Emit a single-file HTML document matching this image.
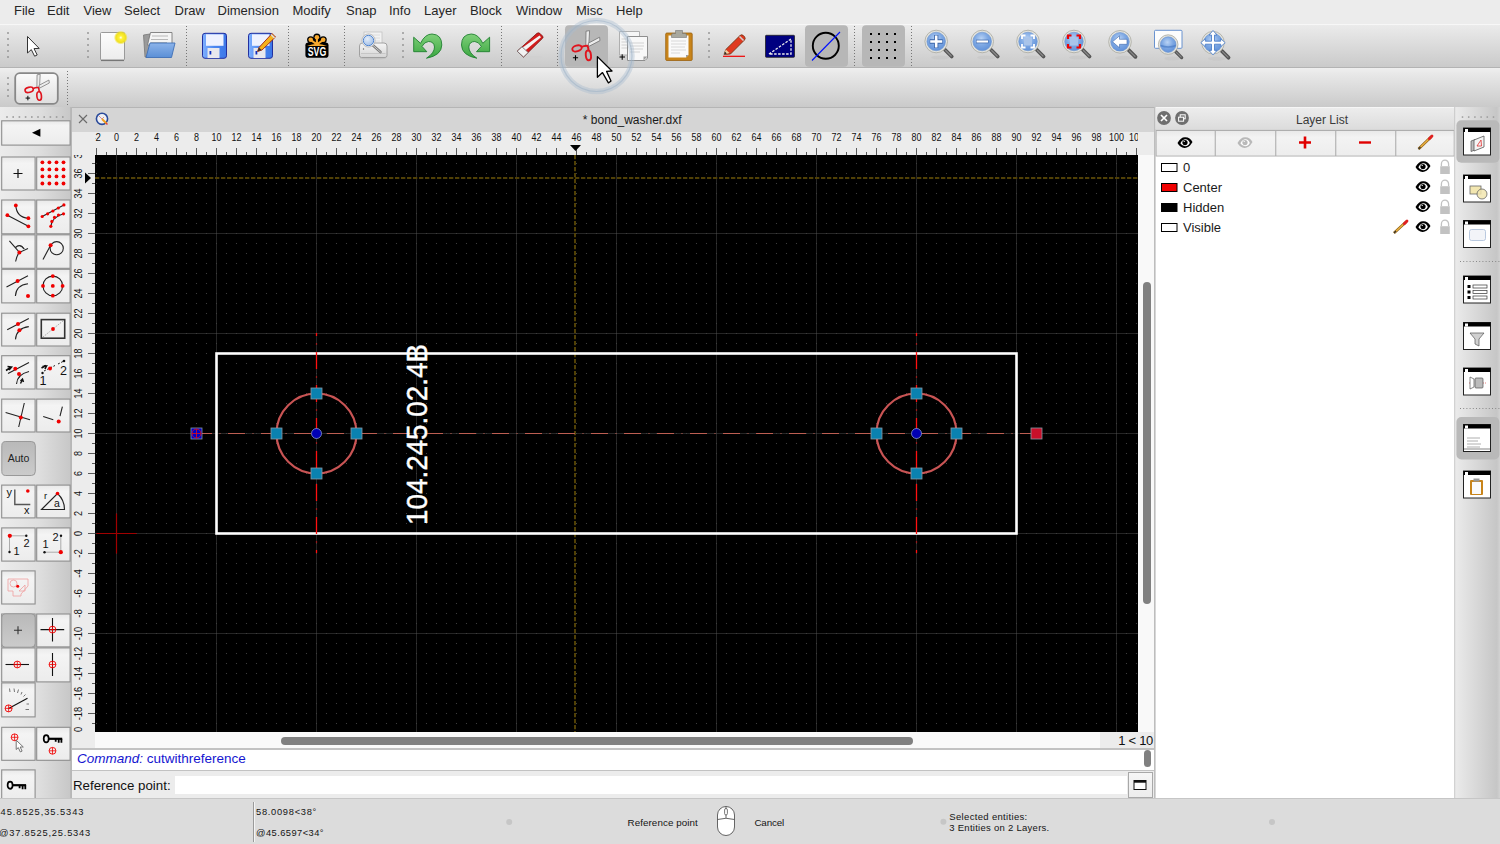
<!DOCTYPE html><html><head><meta charset="utf-8"><style>
*{margin:0;padding:0;box-sizing:border-box}
html,body{width:1500px;height:844px;overflow:hidden;background:#ececec;font-family:"Liberation Sans",sans-serif;color:#222}
.a{position:absolute}
.menu span{position:absolute;top:3px;font-size:13px;color:#262626;white-space:nowrap}
.grip{position:absolute;width:3px;background:radial-gradient(circle,#8a8a8a 45%,transparent 55%) 0 0/3px 4.2px repeat-y}
.sep{position:absolute;width:1px;background:linear-gradient(#7a7a7a 50%,transparent 50%) 0 0/1px 3px repeat-y}
.btn{position:absolute;border:1px solid #8e8e8e;background:linear-gradient(#f3f3f3,#e6e6e6)}
.rl{position:absolute;font-size:10px;color:#111;text-align:center;width:30px;line-height:10px}
</style></head><body>
<div class="a" style="left:0;top:0;width:1500px;height:24px;background:#ececec"></div>
<div class="menu">
<span style="left:14px">File</span>
<span style="left:47px">Edit</span>
<span style="left:83.5px">View</span>
<span style="left:124px">Select</span>
<span style="left:174.5px">Draw</span>
<span style="left:217.5px">Dimension</span>
<span style="left:292.5px">Modify</span>
<span style="left:346px">Snap</span>
<span style="left:389px">Info</span>
<span style="left:424px">Layer</span>
<span style="left:470px">Block</span>
<span style="left:516px">Window</span>
<span style="left:576px">Misc</span>
<span style="left:616px">Help</span>
</div>
<div class="a" style="left:0;top:24px;width:1500px;height:44px;background:linear-gradient(#ebebeb,#e6e6e6 15%,#cacaca);border-top:1px solid #f7f7f7;border-bottom:1.5px solid #b3b3b3"></div>
<div class="a" style="left:0;top:68px;width:1500px;height:40px;background:linear-gradient(#efefef,#e8e8e8 15%,#cacaca);border-bottom:1.5px solid #b5b5b5"></div>
<svg class="a" style="left:0;top:107px" width="72" height="691" viewBox="0 107 72 691"><defs><linearGradient id="gbt" x1="0" y1="0" x2="0" y2="1"><stop offset="0" stop-color="#e9e9e9"/><stop offset="0.2" stop-color="#f4f4f4"/><stop offset="1" stop-color="#ececec"/></linearGradient>
<linearGradient id="gstrip" x1="0" y1="0" x2="1" y2="0"><stop offset="0" stop-color="#ececec"/><stop offset="0.55" stop-color="#dedede"/><stop offset="1" stop-color="#c6c6c6"/></linearGradient>
<linearGradient id="gpress" x1="0" y1="0" x2="0" y2="1"><stop offset="0" stop-color="#b9b9b9"/><stop offset="1" stop-color="#cbcbcb"/></linearGradient></defs><rect x="0" y="107" width="72" height="691" fill="url(#gstrip)"/><rect x="70.3" y="107" width="1.5" height="691" fill="#b4b4b4"/><rect x="6.2" y="116.2" width="1.6" height="1.6" fill="#9a9a9a"/><rect x="12.399999999999999" y="116.2" width="1.6" height="1.6" fill="#9a9a9a"/><rect x="18.599999999999998" y="116.2" width="1.6" height="1.6" fill="#9a9a9a"/><rect x="24.8" y="116.2" width="1.6" height="1.6" fill="#9a9a9a"/><rect x="31.0" y="116.2" width="1.6" height="1.6" fill="#9a9a9a"/><rect x="37.2" y="116.2" width="1.6" height="1.6" fill="#9a9a9a"/><rect x="43.400000000000006" y="116.2" width="1.6" height="1.6" fill="#9a9a9a"/><rect x="49.6" y="116.2" width="1.6" height="1.6" fill="#9a9a9a"/><rect x="55.800000000000004" y="116.2" width="1.6" height="1.6" fill="#9a9a9a"/><rect x="62.00000000000001" y="116.2" width="1.6" height="1.6" fill="#9a9a9a"/><rect x="1.7" y="120.8" width="68.39999999999999" height="24.299999999999997" rx="0" fill="url(#gbt)" stroke="#8e8e8e" stroke-width="1.1"/><path d="M32 132.8L40.4 128.8V136.8Z" fill="#000"/><rect x="1.7" y="157.0" width="33.4" height="33.0" rx="0" fill="url(#gbt)" stroke="#8e8e8e" stroke-width="1.1"/><rect x="36.7" y="157.0" width="33.39999999999999" height="33.0" rx="0" fill="url(#gbt)" stroke="#8e8e8e" stroke-width="1.1"/><rect x="1.7" y="200.0" width="33.4" height="33.80000000000001" rx="0" fill="url(#gbt)" stroke="#8e8e8e" stroke-width="1.1"/><rect x="36.7" y="200.0" width="33.39999999999999" height="33.80000000000001" rx="0" fill="url(#gbt)" stroke="#8e8e8e" stroke-width="1.1"/><rect x="1.7" y="234.8" width="33.4" height="33.5" rx="0" fill="url(#gbt)" stroke="#8e8e8e" stroke-width="1.1"/><rect x="36.7" y="234.8" width="33.39999999999999" height="33.5" rx="0" fill="url(#gbt)" stroke="#8e8e8e" stroke-width="1.1"/><rect x="1.7" y="269.3" width="33.4" height="33.599999999999966" rx="0" fill="url(#gbt)" stroke="#8e8e8e" stroke-width="1.1"/><rect x="36.7" y="269.3" width="33.39999999999999" height="33.599999999999966" rx="0" fill="url(#gbt)" stroke="#8e8e8e" stroke-width="1.1"/><rect x="1.7" y="313.2" width="33.4" height="32.80000000000001" rx="0" fill="url(#gbt)" stroke="#8e8e8e" stroke-width="1.1"/><rect x="36.7" y="313.2" width="33.39999999999999" height="32.80000000000001" rx="0" fill="url(#gbt)" stroke="#8e8e8e" stroke-width="1.1"/><rect x="1.7" y="355.7" width="33.4" height="33.30000000000001" rx="0" fill="url(#gbt)" stroke="#8e8e8e" stroke-width="1.1"/><rect x="36.7" y="355.7" width="33.39999999999999" height="33.30000000000001" rx="0" fill="url(#gbt)" stroke="#8e8e8e" stroke-width="1.1"/><rect x="1.7" y="399.1" width="33.4" height="32.89999999999998" rx="0" fill="url(#gbt)" stroke="#8e8e8e" stroke-width="1.1"/><rect x="36.7" y="399.1" width="33.39999999999999" height="32.89999999999998" rx="0" fill="url(#gbt)" stroke="#8e8e8e" stroke-width="1.1"/><rect x="1.7" y="485.1" width="33.4" height="32.799999999999955" rx="0" fill="url(#gbt)" stroke="#8e8e8e" stroke-width="1.1"/><rect x="36.7" y="485.1" width="33.39999999999999" height="32.799999999999955" rx="0" fill="url(#gbt)" stroke="#8e8e8e" stroke-width="1.1"/><rect x="1.7" y="527.9" width="33.4" height="33.200000000000045" rx="0" fill="url(#gbt)" stroke="#8e8e8e" stroke-width="1.1"/><rect x="36.7" y="527.9" width="33.39999999999999" height="33.200000000000045" rx="0" fill="url(#gbt)" stroke="#8e8e8e" stroke-width="1.1"/><rect x="1.7" y="614.0" width="33.4" height="32.89999999999998" rx="0" fill="url(#gbt)" stroke="#8e8e8e" stroke-width="1.1"/><rect x="36.7" y="614.0" width="33.39999999999999" height="32.89999999999998" rx="0" fill="url(#gbt)" stroke="#8e8e8e" stroke-width="1.1"/><rect x="1.7" y="647.9" width="33.4" height="34.0" rx="0" fill="url(#gbt)" stroke="#8e8e8e" stroke-width="1.1"/><rect x="36.7" y="647.9" width="33.39999999999999" height="34.0" rx="0" fill="url(#gbt)" stroke="#8e8e8e" stroke-width="1.1"/><rect x="1.7" y="727.3" width="33.4" height="33.0" rx="0" fill="url(#gbt)" stroke="#8e8e8e" stroke-width="1.1"/><rect x="36.7" y="727.3" width="33.39999999999999" height="33.0" rx="0" fill="url(#gbt)" stroke="#8e8e8e" stroke-width="1.1"/><rect x="1.7" y="570.9" width="33.4" height="33.10000000000002" rx="0" fill="url(#gbt)" stroke="#8e8e8e" stroke-width="1.1"/><rect x="1.7" y="682.9" width="33.4" height="34.0" rx="0" fill="url(#gbt)" stroke="#8e8e8e" stroke-width="1.1"/><rect x="1.7" y="769.9" width="33.4" height="29.600000000000023" rx="0" fill="url(#gbt)" stroke="#8e8e8e" stroke-width="1.1"/><rect x="1.8" y="441.5" width="33.5" height="34" rx="4" fill="url(#gpress)" stroke="#999" stroke-width="1"/><text x="18.5" y="462" text-anchor="middle" font-family="Liberation Sans" font-size="10.5" fill="#222">Auto</text><rect x="1.8" y="613.8" width="33.4" height="33.4" rx="4" fill="url(#gpress)" stroke="#999" stroke-width="1"/><path d="M13.5 173.5H22.5M18 169V178" stroke="#111" stroke-width="1.2"/><circle cx="42.4" cy="162.3" r="1.9" fill="#f00000"/><circle cx="42.4" cy="169.4" r="1.9" fill="#f00000"/><circle cx="42.4" cy="176.4" r="1.9" fill="#f00000"/><circle cx="42.4" cy="183.5" r="1.9" fill="#f00000"/><circle cx="49.4" cy="162.3" r="1.9" fill="#f00000"/><circle cx="49.4" cy="169.4" r="1.9" fill="#f00000"/><circle cx="49.4" cy="176.4" r="1.9" fill="#f00000"/><circle cx="49.4" cy="183.5" r="1.9" fill="#f00000"/><circle cx="56.5" cy="162.3" r="1.9" fill="#f00000"/><circle cx="56.5" cy="169.4" r="1.9" fill="#f00000"/><circle cx="56.5" cy="176.4" r="1.9" fill="#f00000"/><circle cx="56.5" cy="183.5" r="1.9" fill="#f00000"/><circle cx="63.5" cy="162.3" r="1.9" fill="#f00000"/><circle cx="63.5" cy="169.4" r="1.9" fill="#f00000"/><circle cx="63.5" cy="176.4" r="1.9" fill="#f00000"/><circle cx="63.5" cy="183.5" r="1.9" fill="#f00000"/><path d="M7.4 215.2L28.4 226.3M15.8 205.4Q16.5 217.5 28.4 218.2" stroke="#222" stroke-width="1.1" fill="none"/><circle cx="7.4" cy="215.2" r="1.9" fill="#f00000"/><circle cx="28.4" cy="226.3" r="1.9" fill="#f00000"/><circle cx="15.8" cy="205.4" r="1.9" fill="#f00000"/><circle cx="28.4" cy="218.2" r="1.9" fill="#f00000"/><path d="M42.2 216.5L63.9 204.9M50.8 226.3Q52 217 63.5 213.8" stroke="#222" stroke-width="1.1" fill="none"/><circle cx="42.2" cy="216.5" r="1.6" fill="#f00000"/><circle cx="47.6" cy="213.8" r="1.6" fill="#f00000"/><circle cx="52.9" cy="211" r="1.6" fill="#f00000"/><circle cx="58.3" cy="208" r="1.6" fill="#f00000"/><circle cx="63.9" cy="204.9" r="1.6" fill="#f00000"/><circle cx="50.8" cy="226.3" r="1.6" fill="#f00000"/><circle cx="51.9" cy="221.4" r="1.6" fill="#f00000"/><circle cx="54.5" cy="217.4" r="1.6" fill="#f00000"/><circle cx="58.5" cy="215" r="1.6" fill="#f00000"/><circle cx="63.5" cy="213.8" r="1.6" fill="#f00000"/><path d="M9.4 240.9L19.4 252.4L28 248.5M19.4 252.4Q16.5 256 15.6 261.5M15.5 247.5Q20 243 24 249" stroke="#222" stroke-width="1.1" fill="none"/><path d="M15.5 247.5Q20 243.5 24.5 248.5" stroke="#333" stroke-width="0.7" fill="none"/><circle cx="19.4" cy="252.4" r="2" fill="#f00000"/><circle cx="56.7" cy="248.2" r="6.6" stroke="#222" stroke-width="1.1" fill="none"/><path d="M43 259.5L50.6 245.2" stroke="#222" stroke-width="1.1" fill="none"/><circle cx="50.6" cy="245.2" r="2" fill="#f00000"/><path d="M6.5 286.9L28 275.8M15.4 296Q16 285 28 283.7" stroke="#222" stroke-width="1.1" fill="none"/><circle cx="17.6" cy="281" r="2" fill="#f00000"/><circle cx="28" cy="296" r="2" fill="#f00000"/><circle cx="52.8" cy="285.9" r="9.8" stroke="#222" stroke-width="1.1" fill="none"/><circle cx="52.8" cy="285.9" r="1.9" fill="#f00000"/><circle cx="52.8" cy="276.1" r="1.9" fill="#f00000"/><circle cx="52.8" cy="295.7" r="1.9" fill="#f00000"/><circle cx="43" cy="285.9" r="1.9" fill="#f00000"/><circle cx="62.6" cy="285.9" r="1.9" fill="#f00000"/><path d="M7.2 329.8L28.8 318.6M15.5 339.4Q16.5 328 28.8 326.6" stroke="#222" stroke-width="1.1" fill="none"/><circle cx="18" cy="323.9" r="2" fill="#f00000"/><circle cx="19.4" cy="330.3" r="2" fill="#f00000"/><rect x="41.3" y="319.6" width="23.4" height="18.6" fill="none" stroke="#333" stroke-width="1.6"/><path d="M43 337L63.5 320.5" stroke="#888" stroke-width="0.7" stroke-dasharray="1.5 1.2"/><circle cx="53" cy="329" r="1.9" fill="#f00000"/><path d="M8 373.5L29 362.5M16.5 384Q17 374.5 29 371.5" stroke="#222" stroke-width="1.1" fill="none"/><path d="M6 370.5L10.5 367.5M7.5 366.5L11.5 367L9 370" stroke="#111" stroke-width="1.6" fill="none"/><path d="M20.5 383.5L22.5 379.5M20.5 381L22.5 379L23.5 382" stroke="#111" stroke-width="1.4" fill="none"/><circle cx="15.3" cy="368.8" r="2" fill="#f00000"/><circle cx="19" cy="374" r="2" fill="#f00000"/><path d="M44 371L55 365.5M58 364L63 361.5" stroke="#222" stroke-width="1" stroke-dasharray="2 1.5"/><path d="M41.5 368L46 365.5M42.5 366.5L46.5 366L45 369" stroke="#111" stroke-width="1.6" fill="none"/><circle cx="42.5" cy="373" r="1.2" fill="#111"/><circle cx="64" cy="361" r="1.3" fill="#111"/><circle cx="50" cy="368.5" r="2" fill="#f00000"/><text x="39.5" y="385.2" font-family="Liberation Sans" font-size="12.5" fill="#111">1</text><text x="60" y="375.2" font-family="Liberation Sans" font-size="12.5" fill="#111">2</text><path d="M5.6 412.5L30 419.7M24.3 403L18.7 427" stroke="#222" stroke-width="1.1" fill="none"/><circle cx="20.8" cy="417.5" r="2" fill="#f00000"/><path d="M43.2 416.5L53.3 419.7M62.4 406.6L60 416.2" stroke="#222" stroke-width="1.1" fill="none"/><circle cx="58.7" cy="421.5" r="2" fill="#f00000"/><path d="M14.8 489.5V504.5H30.3" stroke="#555" stroke-width="1.4" fill="none"/><text x="6.5" y="496" font-family="Liberation Sans" font-size="11" fill="#111">y</text><text x="24" y="513.5" font-family="Liberation Sans" font-size="11" fill="#111">x</text><circle cx="27.8" cy="491" r="1.8" fill="#f00000"/><path d="M41.5 509.5L57.5 493.5Q64.5 500 64.5 509.5Z" stroke="#222" stroke-width="1.1" fill="none"/><text x="44" y="498.5" font-family="Liberation Sans" font-size="9.5" fill="#111">r</text><text x="54" y="507" font-family="Liberation Sans" font-size="10.5" fill="#111">a</text><circle cx="57.5" cy="493.5" r="1.8" fill="#f00000"/><path d="M9.5 535.8V552.2M9.5 535.8H26" stroke="#999" stroke-width="0.8"/><circle cx="9.8" cy="535.8" r="2.1" fill="#f00000"/><circle cx="9.5" cy="552" r="1.2" fill="#111"/><circle cx="26.3" cy="535.8" r="1.2" fill="#111"/><text x="13.5" y="554.5" font-family="Liberation Sans" font-size="11" fill="#111">1</text><text x="23.5" y="546.5" font-family="Liberation Sans" font-size="11" fill="#111">2</text><path d="M60.8 535.8V552.2M44.5 552.2H60.8" stroke="#999" stroke-width="0.8"/><circle cx="60.8" cy="552.2" r="2.1" fill="#f00000"/><circle cx="44.5" cy="552.2" r="1.2" fill="#111"/><circle cx="61" cy="535.8" r="1.2" fill="#111"/><text x="42.5" y="548" font-family="Liberation Sans" font-size="11" fill="#111">1</text><text x="52.5" y="540.5" font-family="Liberation Sans" font-size="11" fill="#111">2</text><path d="M8 579H28V586L21 594V596H13V591H8Z" fill="none" stroke="#f0a0a0" stroke-width="0.8"/><circle cx="13.5" cy="583.5" r="3.5" fill="none" stroke="#f0a0a0" stroke-width="0.8"/><path d="M19 591L25 585V591Z" fill="none" stroke="#f0a0a0" stroke-width="0.8"/><circle cx="17.7" cy="586.3" r="1.5" fill="#f00000"/><path d="M14 630.3H22M18 626.3V634.3" stroke="#333" stroke-width="1.1"/><path d="M40.5 629.6H64.2M52.5 617.9V641.5" stroke="#111" stroke-width="1.1"/><circle cx="52.5" cy="629.6" r="3.4" fill="none" stroke="#f00000" stroke-width="0.9"/><path d="M49.1 629.6H55.9M52.5 626.2V633.0" stroke="#f00000" stroke-width="0.8"/><path d="M5.5 664.5H29" stroke="#111" stroke-width="1.1"/><circle cx="17.3" cy="664.5" r="3.4" fill="none" stroke="#f00000" stroke-width="0.9"/><path d="M13.9 664.5H20.7M17.3 661.1V667.9" stroke="#f00000" stroke-width="0.8"/><path d="M52.5 653V676" stroke="#111" stroke-width="1.1"/><circle cx="52.5" cy="664.5" r="3.4" fill="none" stroke="#f00000" stroke-width="0.9"/><path d="M49.1 664.5H55.9M52.5 661.1V667.9" stroke="#f00000" stroke-width="0.8"/><path d="M8.6 708.4L27.5 698.3" stroke="#111" stroke-width="1.1"/><path d="M9.5 688.5L10 692M14 688.5L14.5 692M18.5 689.5L17.5 693M22 692L21 694.5M25.5 694.5L23.5 696.5M26.5 704H29M25.5 709.5H29" stroke="#555" stroke-width="0.8"/><circle cx="8.6" cy="708.4" r="3.5" fill="none" stroke="#f00000" stroke-width="0.9"/><path d="M5.1 708.4H12.1M8.6 704.9V711.9" stroke="#f00000" stroke-width="0.8"/><circle cx="14.6" cy="737.3" r="3.4" fill="none" stroke="#f00000" stroke-width="0.9"/><path d="M11.2 737.3H18.0M14.6 733.9V740.6999999999999" stroke="#f00000" stroke-width="0.8"/><path d="M16.2 740.2V749.5L18.3 747.6L20.3 751.9L22.1 751.1L20.2 747H23.3Z" fill="#fff" stroke="#666" stroke-width="0.9"/><ellipse cx="46.2" cy="738.8" rx="2.5" ry="3.6" fill="none" stroke="#000" stroke-width="1.7"/><path d="M49.0 738.8H62.2" stroke="#000" stroke-width="2.2"/><path d="M58.7 738.8V742.8M61.400000000000006 738.8V742.8M55.7 738.8V741.8" stroke="#000" stroke-width="1.8"/><circle cx="52.5" cy="750.8" r="3.4" fill="none" stroke="#f00000" stroke-width="0.9"/><path d="M49.1 750.8H55.9M52.5 747.4V754.1999999999999" stroke="#f00000" stroke-width="0.8"/><ellipse cx="10.1" cy="785.2" rx="2.5" ry="3.6" fill="none" stroke="#000" stroke-width="1.7"/><path d="M12.899999999999999 785.2H26.1" stroke="#000" stroke-width="2.2"/><path d="M22.6 785.2V789.2M25.299999999999997 785.2V789.2M19.6 785.2V788.2" stroke="#000" stroke-width="1.8"/></svg>
<div class="a" style="left:72px;top:108px;width:1083px;height:24px;background:#d5d5d5"></div>
<div class="a" style="left:72px;top:132px;width:1083px;height:616px;background:#ececec"></div>
<svg class="a" style="left:95px;top:155px" width="1043" height="577" viewBox="95 155 1043 577"><defs><pattern id="dots" x="116" y="163" width="10" height="10" patternUnits="userSpaceOnUse"><rect width="1" height="1" fill="#3e3e3e"/></pattern></defs><rect x="95" y="155" width="1043" height="577" fill="#000"/><path d="M116.5 155V732 M216.5 155V732 M316.5 155V732 M416.5 155V732 M516.5 155V732 M616.5 155V732 M716.5 155V732 M816.5 155V732 M916.5 155V732 M1016.5 155V732 M1116.5 155V732 M95 233.5H1138 M95 333.5H1138 M95 433.5H1138 M95 533.5H1138 M95 633.5H1138" stroke="#262626" stroke-width="1" fill="none"/><rect x="95" y="155" width="1043" height="577" fill="url(#dots)"/><path d="M575 155V732" stroke="#504006" stroke-width="2" stroke-dasharray="4.3 1.7" fill="none"/><path d="M95 178H1138" stroke="#504006" stroke-width="2" stroke-dasharray="4.3 1.7" fill="none"/><path d="M96.5 533.5H136.5M116.5 513.5V553.5" stroke="#a00000" stroke-width="1.2" fill="none"/><rect x="216.5" y="353.5" width="800" height="180" stroke="#fff" stroke-width="2.6" fill="none"/><path d="M316.5 333V553" stroke="#ff1010" stroke-width="1.3" stroke-dasharray="17 7.5 1 7.5" stroke-dashoffset="14" fill="none"/><path d="M916.5 333V553" stroke="#ff1010" stroke-width="1.3" stroke-dasharray="17 7.5 1 7.5" stroke-dashoffset="14" fill="none"/><path d="M196.5 433.5H1036.5" stroke="#bd5e52" stroke-width="1.15" stroke-dasharray="17 7.5 1 7.5" stroke-dashoffset="1.5" fill="none"/><circle cx="316.5" cy="433.5" r="40" stroke="#c85454" stroke-width="2.2" fill="none"/><circle cx="916.5" cy="433.5" r="40" stroke="#c85454" stroke-width="2.2" fill="none"/><text x="0" y="0" transform="translate(426.5 525) rotate(-90)" font-family="Liberation Sans" font-size="29.5" textLength="181" lengthAdjust="spacingAndGlyphs" fill="#fff" stroke="#fff" stroke-width="0.45">104.245.02.4B</text><rect x="311.0" y="388.0" width="11" height="11" fill="#0a82b0" stroke="#8a9aa6" stroke-width="0.8"/><rect x="311.0" y="468.0" width="11" height="11" fill="#0a82b0" stroke="#8a9aa6" stroke-width="0.8"/><rect x="271.0" y="428.0" width="11" height="11" fill="#0a82b0" stroke="#8a9aa6" stroke-width="0.8"/><rect x="351.0" y="428.0" width="11" height="11" fill="#0a82b0" stroke="#8a9aa6" stroke-width="0.8"/><circle cx="316.5" cy="433.5" r="5" fill="#0000b4" stroke="#8a9ad0" stroke-width="0.8"/><rect x="911.0" y="388.0" width="11" height="11" fill="#0a82b0" stroke="#8a9aa6" stroke-width="0.8"/><rect x="911.0" y="468.0" width="11" height="11" fill="#0a82b0" stroke="#8a9aa6" stroke-width="0.8"/><rect x="871.0" y="428.0" width="11" height="11" fill="#0a82b0" stroke="#8a9aa6" stroke-width="0.8"/><rect x="951.0" y="428.0" width="11" height="11" fill="#0a82b0" stroke="#8a9aa6" stroke-width="0.8"/><circle cx="916.5" cy="433.5" r="5" fill="#0000b4" stroke="#8a9ad0" stroke-width="0.8"/><rect x="191.0" y="428.0" width="11" height="11" fill="#0000c8" stroke="#8a9aa6" stroke-width="0.8"/><path d="M196.5 428.8V438.2M191.8 433.5H201.2" stroke="#e01010" stroke-width="0.8"/><circle cx="196.5" cy="433.5" r="4.5" stroke="#e01010" stroke-width="0.8" fill="none"/><rect x="1031.0" y="428.0" width="11" height="11" fill="#c8102a" stroke="#8a9aa6" stroke-width="0.8"/></svg>
<svg class="a" style="left:95px;top:132px" width="1043" height="23" viewBox="95 132 1043 23"><path d="M96.5 148V155 M106.5 152V155 M116.5 148V155 M126.5 152V155 M136.5 148V155 M146.5 152V155 M156.5 148V155 M166.5 152V155 M176.5 148V155 M186.5 152V155 M196.5 148V155 M206.5 152V155 M216.5 148V155 M226.5 152V155 M236.5 148V155 M246.5 152V155 M256.5 148V155 M266.5 152V155 M276.5 148V155 M286.5 152V155 M296.5 148V155 M306.5 152V155 M316.5 148V155 M326.5 152V155 M336.5 148V155 M346.5 152V155 M356.5 148V155 M366.5 152V155 M376.5 148V155 M386.5 152V155 M396.5 148V155 M406.5 152V155 M416.5 148V155 M426.5 152V155 M436.5 148V155 M446.5 152V155 M456.5 148V155 M466.5 152V155 M476.5 148V155 M486.5 152V155 M496.5 148V155 M506.5 152V155 M516.5 148V155 M526.5 152V155 M536.5 148V155 M546.5 152V155 M556.5 148V155 M566.5 152V155 M576.5 148V155 M586.5 152V155 M596.5 148V155 M606.5 152V155 M616.5 148V155 M626.5 152V155 M636.5 148V155 M646.5 152V155 M656.5 148V155 M666.5 152V155 M676.5 148V155 M686.5 152V155 M696.5 148V155 M706.5 152V155 M716.5 148V155 M726.5 152V155 M736.5 148V155 M746.5 152V155 M756.5 148V155 M766.5 152V155 M776.5 148V155 M786.5 152V155 M796.5 148V155 M806.5 152V155 M816.5 148V155 M826.5 152V155 M836.5 148V155 M846.5 152V155 M856.5 148V155 M866.5 152V155 M876.5 148V155 M886.5 152V155 M896.5 148V155 M906.5 152V155 M916.5 148V155 M926.5 152V155 M936.5 148V155 M946.5 152V155 M956.5 148V155 M966.5 152V155 M976.5 148V155 M986.5 152V155 M996.5 148V155 M1006.5 152V155 M1016.5 148V155 M1026.5 152V155 M1036.5 148V155 M1046.5 152V155 M1056.5 148V155 M1066.5 152V155 M1076.5 148V155 M1086.5 152V155 M1096.5 148V155 M1106.5 152V155 M1116.5 148V155 M1126.5 152V155 M1136.5 148V155" stroke="#5a5a5a" stroke-width="1"/><text x="96.5" y="141.2" text-anchor="middle" font-family="Liberation Sans" font-size="10" fill="#111" textLength="8.6" lengthAdjust="spacingAndGlyphs">-2</text><text x="116.5" y="141.2" text-anchor="middle" font-family="Liberation Sans" font-size="10" fill="#111" textLength="5.0" lengthAdjust="spacingAndGlyphs">0</text><text x="136.5" y="141.2" text-anchor="middle" font-family="Liberation Sans" font-size="10" fill="#111" textLength="5.0" lengthAdjust="spacingAndGlyphs">2</text><text x="156.5" y="141.2" text-anchor="middle" font-family="Liberation Sans" font-size="10" fill="#111" textLength="5.0" lengthAdjust="spacingAndGlyphs">4</text><text x="176.5" y="141.2" text-anchor="middle" font-family="Liberation Sans" font-size="10" fill="#111" textLength="5.0" lengthAdjust="spacingAndGlyphs">6</text><text x="196.5" y="141.2" text-anchor="middle" font-family="Liberation Sans" font-size="10" fill="#111" textLength="5.0" lengthAdjust="spacingAndGlyphs">8</text><text x="216.5" y="141.2" text-anchor="middle" font-family="Liberation Sans" font-size="10" fill="#111" textLength="9.9" lengthAdjust="spacingAndGlyphs">10</text><text x="236.5" y="141.2" text-anchor="middle" font-family="Liberation Sans" font-size="10" fill="#111" textLength="9.9" lengthAdjust="spacingAndGlyphs">12</text><text x="256.5" y="141.2" text-anchor="middle" font-family="Liberation Sans" font-size="10" fill="#111" textLength="9.9" lengthAdjust="spacingAndGlyphs">14</text><text x="276.5" y="141.2" text-anchor="middle" font-family="Liberation Sans" font-size="10" fill="#111" textLength="9.9" lengthAdjust="spacingAndGlyphs">16</text><text x="296.5" y="141.2" text-anchor="middle" font-family="Liberation Sans" font-size="10" fill="#111" textLength="9.9" lengthAdjust="spacingAndGlyphs">18</text><text x="316.5" y="141.2" text-anchor="middle" font-family="Liberation Sans" font-size="10" fill="#111" textLength="9.9" lengthAdjust="spacingAndGlyphs">20</text><text x="336.5" y="141.2" text-anchor="middle" font-family="Liberation Sans" font-size="10" fill="#111" textLength="9.9" lengthAdjust="spacingAndGlyphs">22</text><text x="356.5" y="141.2" text-anchor="middle" font-family="Liberation Sans" font-size="10" fill="#111" textLength="9.9" lengthAdjust="spacingAndGlyphs">24</text><text x="376.5" y="141.2" text-anchor="middle" font-family="Liberation Sans" font-size="10" fill="#111" textLength="9.9" lengthAdjust="spacingAndGlyphs">26</text><text x="396.5" y="141.2" text-anchor="middle" font-family="Liberation Sans" font-size="10" fill="#111" textLength="9.9" lengthAdjust="spacingAndGlyphs">28</text><text x="416.5" y="141.2" text-anchor="middle" font-family="Liberation Sans" font-size="10" fill="#111" textLength="9.9" lengthAdjust="spacingAndGlyphs">30</text><text x="436.5" y="141.2" text-anchor="middle" font-family="Liberation Sans" font-size="10" fill="#111" textLength="9.9" lengthAdjust="spacingAndGlyphs">32</text><text x="456.5" y="141.2" text-anchor="middle" font-family="Liberation Sans" font-size="10" fill="#111" textLength="9.9" lengthAdjust="spacingAndGlyphs">34</text><text x="476.5" y="141.2" text-anchor="middle" font-family="Liberation Sans" font-size="10" fill="#111" textLength="9.9" lengthAdjust="spacingAndGlyphs">36</text><text x="496.5" y="141.2" text-anchor="middle" font-family="Liberation Sans" font-size="10" fill="#111" textLength="9.9" lengthAdjust="spacingAndGlyphs">38</text><text x="516.5" y="141.2" text-anchor="middle" font-family="Liberation Sans" font-size="10" fill="#111" textLength="9.9" lengthAdjust="spacingAndGlyphs">40</text><text x="536.5" y="141.2" text-anchor="middle" font-family="Liberation Sans" font-size="10" fill="#111" textLength="9.9" lengthAdjust="spacingAndGlyphs">42</text><text x="556.5" y="141.2" text-anchor="middle" font-family="Liberation Sans" font-size="10" fill="#111" textLength="9.9" lengthAdjust="spacingAndGlyphs">44</text><text x="576.5" y="141.2" text-anchor="middle" font-family="Liberation Sans" font-size="10" fill="#111" textLength="9.9" lengthAdjust="spacingAndGlyphs">46</text><text x="596.5" y="141.2" text-anchor="middle" font-family="Liberation Sans" font-size="10" fill="#111" textLength="9.9" lengthAdjust="spacingAndGlyphs">48</text><text x="616.5" y="141.2" text-anchor="middle" font-family="Liberation Sans" font-size="10" fill="#111" textLength="9.9" lengthAdjust="spacingAndGlyphs">50</text><text x="636.5" y="141.2" text-anchor="middle" font-family="Liberation Sans" font-size="10" fill="#111" textLength="9.9" lengthAdjust="spacingAndGlyphs">52</text><text x="656.5" y="141.2" text-anchor="middle" font-family="Liberation Sans" font-size="10" fill="#111" textLength="9.9" lengthAdjust="spacingAndGlyphs">54</text><text x="676.5" y="141.2" text-anchor="middle" font-family="Liberation Sans" font-size="10" fill="#111" textLength="9.9" lengthAdjust="spacingAndGlyphs">56</text><text x="696.5" y="141.2" text-anchor="middle" font-family="Liberation Sans" font-size="10" fill="#111" textLength="9.9" lengthAdjust="spacingAndGlyphs">58</text><text x="716.5" y="141.2" text-anchor="middle" font-family="Liberation Sans" font-size="10" fill="#111" textLength="9.9" lengthAdjust="spacingAndGlyphs">60</text><text x="736.5" y="141.2" text-anchor="middle" font-family="Liberation Sans" font-size="10" fill="#111" textLength="9.9" lengthAdjust="spacingAndGlyphs">62</text><text x="756.5" y="141.2" text-anchor="middle" font-family="Liberation Sans" font-size="10" fill="#111" textLength="9.9" lengthAdjust="spacingAndGlyphs">64</text><text x="776.5" y="141.2" text-anchor="middle" font-family="Liberation Sans" font-size="10" fill="#111" textLength="9.9" lengthAdjust="spacingAndGlyphs">66</text><text x="796.5" y="141.2" text-anchor="middle" font-family="Liberation Sans" font-size="10" fill="#111" textLength="9.9" lengthAdjust="spacingAndGlyphs">68</text><text x="816.5" y="141.2" text-anchor="middle" font-family="Liberation Sans" font-size="10" fill="#111" textLength="9.9" lengthAdjust="spacingAndGlyphs">70</text><text x="836.5" y="141.2" text-anchor="middle" font-family="Liberation Sans" font-size="10" fill="#111" textLength="9.9" lengthAdjust="spacingAndGlyphs">72</text><text x="856.5" y="141.2" text-anchor="middle" font-family="Liberation Sans" font-size="10" fill="#111" textLength="9.9" lengthAdjust="spacingAndGlyphs">74</text><text x="876.5" y="141.2" text-anchor="middle" font-family="Liberation Sans" font-size="10" fill="#111" textLength="9.9" lengthAdjust="spacingAndGlyphs">76</text><text x="896.5" y="141.2" text-anchor="middle" font-family="Liberation Sans" font-size="10" fill="#111" textLength="9.9" lengthAdjust="spacingAndGlyphs">78</text><text x="916.5" y="141.2" text-anchor="middle" font-family="Liberation Sans" font-size="10" fill="#111" textLength="9.9" lengthAdjust="spacingAndGlyphs">80</text><text x="936.5" y="141.2" text-anchor="middle" font-family="Liberation Sans" font-size="10" fill="#111" textLength="9.9" lengthAdjust="spacingAndGlyphs">82</text><text x="956.5" y="141.2" text-anchor="middle" font-family="Liberation Sans" font-size="10" fill="#111" textLength="9.9" lengthAdjust="spacingAndGlyphs">84</text><text x="976.5" y="141.2" text-anchor="middle" font-family="Liberation Sans" font-size="10" fill="#111" textLength="9.9" lengthAdjust="spacingAndGlyphs">86</text><text x="996.5" y="141.2" text-anchor="middle" font-family="Liberation Sans" font-size="10" fill="#111" textLength="9.9" lengthAdjust="spacingAndGlyphs">88</text><text x="1016.5" y="141.2" text-anchor="middle" font-family="Liberation Sans" font-size="10" fill="#111" textLength="9.9" lengthAdjust="spacingAndGlyphs">90</text><text x="1036.5" y="141.2" text-anchor="middle" font-family="Liberation Sans" font-size="10" fill="#111" textLength="9.9" lengthAdjust="spacingAndGlyphs">92</text><text x="1056.5" y="141.2" text-anchor="middle" font-family="Liberation Sans" font-size="10" fill="#111" textLength="9.9" lengthAdjust="spacingAndGlyphs">94</text><text x="1076.5" y="141.2" text-anchor="middle" font-family="Liberation Sans" font-size="10" fill="#111" textLength="9.9" lengthAdjust="spacingAndGlyphs">96</text><text x="1096.5" y="141.2" text-anchor="middle" font-family="Liberation Sans" font-size="10" fill="#111" textLength="9.9" lengthAdjust="spacingAndGlyphs">98</text><text x="1116.5" y="141.2" text-anchor="middle" font-family="Liberation Sans" font-size="10" fill="#111" textLength="14.9" lengthAdjust="spacingAndGlyphs">100</text><text x="1136.5" y="141.2" text-anchor="middle" font-family="Liberation Sans" font-size="10" fill="#111" textLength="14.9" lengthAdjust="spacingAndGlyphs">102</text><path d="M570 145H581L575.5 151Z" fill="#000"/></svg>
<svg class="a" style="left:72px;top:155px" width="23" height="577" viewBox="72 155 23 577"><path d="M88 733.5H95 M92 723.5H95 M88 713.5H95 M92 703.5H95 M88 693.5H95 M92 683.5H95 M88 673.5H95 M92 663.5H95 M88 653.5H95 M92 643.5H95 M88 633.5H95 M92 623.5H95 M88 613.5H95 M92 603.5H95 M88 593.5H95 M92 583.5H95 M88 573.5H95 M92 563.5H95 M88 553.5H95 M92 543.5H95 M88 533.5H95 M92 523.5H95 M88 513.5H95 M92 503.5H95 M88 493.5H95 M92 483.5H95 M88 473.5H95 M92 463.5H95 M88 453.5H95 M92 443.5H95 M88 433.5H95 M92 423.5H95 M88 413.5H95 M92 403.5H95 M88 393.5H95 M92 383.5H95 M88 373.5H95 M92 363.5H95 M88 353.5H95 M92 343.5H95 M88 333.5H95 M92 323.5H95 M88 313.5H95 M92 303.5H95 M88 293.5H95 M92 283.5H95 M88 273.5H95 M92 263.5H95 M88 253.5H95 M92 243.5H95 M88 233.5H95 M92 223.5H95 M88 213.5H95 M92 203.5H95 M88 193.5H95 M92 183.5H95 M88 173.5H95 M92 163.5H95 M88 153.5H95" stroke="#5a5a5a" stroke-width="1"/><text transform="translate(82 733.5) rotate(-90)" text-anchor="middle" font-family="Liberation Sans" font-size="10" fill="#111" textLength="13.5" lengthAdjust="spacingAndGlyphs">-20</text><text transform="translate(82 713.5) rotate(-90)" text-anchor="middle" font-family="Liberation Sans" font-size="10" fill="#111" textLength="13.5" lengthAdjust="spacingAndGlyphs">-18</text><text transform="translate(82 693.5) rotate(-90)" text-anchor="middle" font-family="Liberation Sans" font-size="10" fill="#111" textLength="13.5" lengthAdjust="spacingAndGlyphs">-16</text><text transform="translate(82 673.5) rotate(-90)" text-anchor="middle" font-family="Liberation Sans" font-size="10" fill="#111" textLength="13.5" lengthAdjust="spacingAndGlyphs">-14</text><text transform="translate(82 653.5) rotate(-90)" text-anchor="middle" font-family="Liberation Sans" font-size="10" fill="#111" textLength="13.5" lengthAdjust="spacingAndGlyphs">-12</text><text transform="translate(82 633.5) rotate(-90)" text-anchor="middle" font-family="Liberation Sans" font-size="10" fill="#111" textLength="13.5" lengthAdjust="spacingAndGlyphs">-10</text><text transform="translate(82 613.5) rotate(-90)" text-anchor="middle" font-family="Liberation Sans" font-size="10" fill="#111" textLength="8.6" lengthAdjust="spacingAndGlyphs">-8</text><text transform="translate(82 593.5) rotate(-90)" text-anchor="middle" font-family="Liberation Sans" font-size="10" fill="#111" textLength="8.6" lengthAdjust="spacingAndGlyphs">-6</text><text transform="translate(82 573.5) rotate(-90)" text-anchor="middle" font-family="Liberation Sans" font-size="10" fill="#111" textLength="8.6" lengthAdjust="spacingAndGlyphs">-4</text><text transform="translate(82 553.5) rotate(-90)" text-anchor="middle" font-family="Liberation Sans" font-size="10" fill="#111" textLength="8.6" lengthAdjust="spacingAndGlyphs">-2</text><text transform="translate(82 533.5) rotate(-90)" text-anchor="middle" font-family="Liberation Sans" font-size="10" fill="#111" textLength="5.0" lengthAdjust="spacingAndGlyphs">0</text><text transform="translate(82 513.5) rotate(-90)" text-anchor="middle" font-family="Liberation Sans" font-size="10" fill="#111" textLength="5.0" lengthAdjust="spacingAndGlyphs">2</text><text transform="translate(82 493.5) rotate(-90)" text-anchor="middle" font-family="Liberation Sans" font-size="10" fill="#111" textLength="5.0" lengthAdjust="spacingAndGlyphs">4</text><text transform="translate(82 473.5) rotate(-90)" text-anchor="middle" font-family="Liberation Sans" font-size="10" fill="#111" textLength="5.0" lengthAdjust="spacingAndGlyphs">6</text><text transform="translate(82 453.5) rotate(-90)" text-anchor="middle" font-family="Liberation Sans" font-size="10" fill="#111" textLength="5.0" lengthAdjust="spacingAndGlyphs">8</text><text transform="translate(82 433.5) rotate(-90)" text-anchor="middle" font-family="Liberation Sans" font-size="10" fill="#111" textLength="9.9" lengthAdjust="spacingAndGlyphs">10</text><text transform="translate(82 413.5) rotate(-90)" text-anchor="middle" font-family="Liberation Sans" font-size="10" fill="#111" textLength="9.9" lengthAdjust="spacingAndGlyphs">12</text><text transform="translate(82 393.5) rotate(-90)" text-anchor="middle" font-family="Liberation Sans" font-size="10" fill="#111" textLength="9.9" lengthAdjust="spacingAndGlyphs">14</text><text transform="translate(82 373.5) rotate(-90)" text-anchor="middle" font-family="Liberation Sans" font-size="10" fill="#111" textLength="9.9" lengthAdjust="spacingAndGlyphs">16</text><text transform="translate(82 353.5) rotate(-90)" text-anchor="middle" font-family="Liberation Sans" font-size="10" fill="#111" textLength="9.9" lengthAdjust="spacingAndGlyphs">18</text><text transform="translate(82 333.5) rotate(-90)" text-anchor="middle" font-family="Liberation Sans" font-size="10" fill="#111" textLength="9.9" lengthAdjust="spacingAndGlyphs">20</text><text transform="translate(82 313.5) rotate(-90)" text-anchor="middle" font-family="Liberation Sans" font-size="10" fill="#111" textLength="9.9" lengthAdjust="spacingAndGlyphs">22</text><text transform="translate(82 293.5) rotate(-90)" text-anchor="middle" font-family="Liberation Sans" font-size="10" fill="#111" textLength="9.9" lengthAdjust="spacingAndGlyphs">24</text><text transform="translate(82 273.5) rotate(-90)" text-anchor="middle" font-family="Liberation Sans" font-size="10" fill="#111" textLength="9.9" lengthAdjust="spacingAndGlyphs">26</text><text transform="translate(82 253.5) rotate(-90)" text-anchor="middle" font-family="Liberation Sans" font-size="10" fill="#111" textLength="9.9" lengthAdjust="spacingAndGlyphs">28</text><text transform="translate(82 233.5) rotate(-90)" text-anchor="middle" font-family="Liberation Sans" font-size="10" fill="#111" textLength="9.9" lengthAdjust="spacingAndGlyphs">30</text><text transform="translate(82 213.5) rotate(-90)" text-anchor="middle" font-family="Liberation Sans" font-size="10" fill="#111" textLength="9.9" lengthAdjust="spacingAndGlyphs">32</text><text transform="translate(82 193.5) rotate(-90)" text-anchor="middle" font-family="Liberation Sans" font-size="10" fill="#111" textLength="9.9" lengthAdjust="spacingAndGlyphs">34</text><text transform="translate(82 173.5) rotate(-90)" text-anchor="middle" font-family="Liberation Sans" font-size="10" fill="#111" textLength="9.9" lengthAdjust="spacingAndGlyphs">36</text><text transform="translate(82 153.5) rotate(-90)" text-anchor="middle" font-family="Liberation Sans" font-size="10" fill="#111" textLength="9.9" lengthAdjust="spacingAndGlyphs">38</text><path d="M85 172.5V183.5L91 178Z" fill="#000"/></svg>
<div class="a" style="left:1138px;top:155px;width:16px;height:593px;background:#f9f9f9"></div>
<div class="a" style="left:1143px;top:282px;width:8px;height:322px;background:#808080;border-radius:4px"></div>
<div class="a" style="left:95px;top:732px;width:1005px;height:16px;background:#f9f9f9"></div>
<div class="a" style="left:281px;top:737px;width:632px;height:8px;background:#808080;border-radius:4px"></div>
<div class="a" style="left:1100px;top:732px;width:54px;height:16px;background:#ececec;font-size:13px;color:#111;text-align:right;line-height:18px;letter-spacing:-0.3px;padding-right:1px">1 &lt; 10</div>
<div class="a" style="left:72px;top:748px;width:1083px;height:2px;background:#c2c2c2"></div>
<div class="a" style="left:72px;top:750px;width:1083px;height:20px;background:#fff"></div>
<div class="a" style="left:72px;top:770px;width:1083px;height:1px;background:#c2c2c2"></div>
<div class="a" style="left:72px;top:771px;width:1083px;height:27px;background:#ececec"></div>
<div class="a" style="left:77px;top:750.5px;font-size:13.5px;color:#1515d0;white-space:nowrap;line-height:16px"><i>Command:</i> cutwithreference</div>
<div class="a" style="left:73px;top:778px;font-size:13.3px;color:#111;white-space:nowrap;line-height:16px">Reference point:</div>
<div class="a" style="left:175px;top:776px;width:952px;height:18px;background:#fff"></div>
<div class="a" style="left:1144px;top:749.5px;width:7px;height:17px;background:#808080;border-radius:3.5px"></div>
<div class="a" style="left:1127.5px;top:772px;width:25px;height:25.5px;background:linear-gradient(#f6f6f6,#ececec);border:1px solid #a8a8a8"></div>
<svg class="a" style="left:1127px;top:772px" width="26" height="26" viewBox="1127 772 26 26"><rect x="1134" y="780.5" width="12" height="9" fill="#fff" stroke="#111" stroke-width="1"/><rect x="1134" y="780.5" width="12" height="2.2" fill="#111"/></svg>
<svg class="a" style="left:1154px;top:107px" width="346" height="691" viewBox="1154 107 346 691"><defs><linearGradient id="gltitle" x1="0" y1="0" x2="0" y2="1"><stop offset="0" stop-color="#ededed"/><stop offset="1" stop-color="#dcdcdc"/></linearGradient>
<linearGradient id="glbtn" x1="0" y1="0" x2="0" y2="1"><stop offset="0" stop-color="#e9e9e9"/><stop offset="0.25" stop-color="#f3f3f3"/><stop offset="1" stop-color="#ededed"/></linearGradient>
<linearGradient id="grstrip" x1="0" y1="0" x2="1" y2="0"><stop offset="0" stop-color="#ebebeb"/><stop offset="0.93" stop-color="#c6c6c6"/><stop offset="1" stop-color="#d2d2d2"/></linearGradient></defs><rect x="1154" y="107" width="301" height="691" fill="#fff"/><rect x="1154" y="107" width="1.6" height="691" fill="#bdbdbd"/><rect x="1155.6" y="107.5" width="299.4" height="21.5" fill="url(#gltitle)"/><text x="1322" y="123.5" text-anchor="middle" font-family="Liberation Sans" font-size="12" fill="#3a3a3a">Layer List</text><circle cx="1164" cy="118" r="6.9" fill="#6f6f6f"/><path d="M1161 115L1167 121M1167 115L1161 121" stroke="#fff" stroke-width="1.7"/><circle cx="1182" cy="118" r="6.9" fill="#6f6f6f"/><rect x="1180.2" y="114.8" width="5" height="4" fill="none" stroke="#fff" stroke-width="1"/><rect x="1178.6" y="117.2" width="5" height="4" fill="#6f6f6f" stroke="#fff" stroke-width="1"/><rect x="1155.6" y="129.5" width="299" height="27" fill="#aeaeae"/><rect x="1156.6" y="131" width="58.100000000000136" height="24.6" fill="url(#glbtn)"/><rect x="1215.8" y="131" width="59.40000000000009" height="24.6" fill="url(#glbtn)"/><rect x="1276.3" y="131" width="58.90000000000009" height="24.6" fill="url(#glbtn)"/><rect x="1336.3" y="131" width="58.90000000000009" height="24.6" fill="url(#glbtn)"/><rect x="1396.3" y="131" width="57.40000000000009" height="24.6" fill="url(#glbtn)"/><g transform="translate(1185 142.6) scale(1.0)"><path d="M-7.5 0.3Q-4 -5.8 0.5 -5.3Q5 -5.2 7.5 -0.5L6.5 1Q3.5 5.6 -0.5 5.3Q-5 5 -7.5 0.3Z" fill="#000"/><path d="M-4.6 0.6Q-2.5 -3.3 0.5 -3.4Q3.6 -3.2 4.8 0.4Q3 3.6 0 3.6Q-3 3.5 -4.6 0.6Z" fill="#fff"/><circle cx="0" cy="0" r="2.6" fill="#000"/><circle cx="-0.8" cy="-1.2" r="0.6" fill="#fff"/></g><g transform="translate(1245 142.6) scale(1.0)"><path d="M-7.5 0.3Q-4 -5.8 0.5 -5.3Q5 -5.2 7.5 -0.5L6.5 1Q3.5 5.6 -0.5 5.3Q-5 5 -7.5 0.3Z" fill="#b9b9b9"/><path d="M-4.6 0.6Q-2.5 -3.3 0.5 -3.4Q3.6 -3.2 4.8 0.4Q3 3.6 0 3.6Q-3 3.5 -4.6 0.6Z" fill="#fff"/><circle cx="0" cy="0" r="2.6" fill="#b9b9b9"/><circle cx="-0.8" cy="-1.2" r="0.6" fill="#fff"/></g><path d="M1299 142.5H1311M1305 136.5V148.5" stroke="#e00000" stroke-width="2.6"/><path d="M1359 142.5H1371" stroke="#e00000" stroke-width="2.4"/><path d="M1418.5 149L1431.5 136.5" stroke="#8a5a10" stroke-width="2.6" stroke-linecap="butt"/><path d="M1418.5 149L1431.5 136.5" stroke="#e8b040" stroke-width="1.6"/><path d="M1429.3 138.7L1432.0 136.0" stroke="#e02020" stroke-width="2.8" stroke-linecap="round"/><path d="M1418.5 149L1420.5 147" stroke="#333" stroke-width="1.2"/><rect x="1161.5" y="163.5" width="15.5" height="8" fill="#fff" stroke="#000" stroke-width="1"/><text x="1183" y="172.2" font-family="Liberation Sans" font-size="13" fill="#1a1a1a">0</text><g transform="translate(1423 166.6) scale(1.0)"><path d="M-7.5 0.3Q-4 -5.8 0.5 -5.3Q5 -5.2 7.5 -0.5L6.5 1Q3.5 5.6 -0.5 5.3Q-5 5 -7.5 0.3Z" fill="#000"/><path d="M-4.6 0.6Q-2.5 -3.3 0.5 -3.4Q3.6 -3.2 4.8 0.4Q3 3.6 0 3.6Q-3 3.5 -4.6 0.6Z" fill="#fff"/><circle cx="0" cy="0" r="2.6" fill="#000"/><circle cx="-0.8" cy="-1.2" r="0.6" fill="#fff"/></g><path d="M1441.4 166.0V164.0A3.6 3.9 0 0 1 1448.6 164.0V166.0" fill="none" stroke="#c2c2c2" stroke-width="1.3"/><rect x="1440.2" y="166.2" width="9.6" height="7.8" fill="#c2c2c2"/><rect x="1161.5" y="183.5" width="15.5" height="8" fill="#f00000" stroke="#000" stroke-width="1"/><text x="1183" y="192.2" font-family="Liberation Sans" font-size="13" fill="#1a1a1a">Center</text><g transform="translate(1423 186.6) scale(1.0)"><path d="M-7.5 0.3Q-4 -5.8 0.5 -5.3Q5 -5.2 7.5 -0.5L6.5 1Q3.5 5.6 -0.5 5.3Q-5 5 -7.5 0.3Z" fill="#000"/><path d="M-4.6 0.6Q-2.5 -3.3 0.5 -3.4Q3.6 -3.2 4.8 0.4Q3 3.6 0 3.6Q-3 3.5 -4.6 0.6Z" fill="#fff"/><circle cx="0" cy="0" r="2.6" fill="#000"/><circle cx="-0.8" cy="-1.2" r="0.6" fill="#fff"/></g><path d="M1441.4 186.0V184.0A3.6 3.9 0 0 1 1448.6 184.0V186.0" fill="none" stroke="#c2c2c2" stroke-width="1.3"/><rect x="1440.2" y="186.2" width="9.6" height="7.8" fill="#c2c2c2"/><rect x="1161.5" y="203.5" width="15.5" height="8" fill="#000" stroke="#000" stroke-width="1"/><text x="1183" y="212.2" font-family="Liberation Sans" font-size="13" fill="#1a1a1a">Hidden</text><g transform="translate(1423 206.6) scale(1.0)"><path d="M-7.5 0.3Q-4 -5.8 0.5 -5.3Q5 -5.2 7.5 -0.5L6.5 1Q3.5 5.6 -0.5 5.3Q-5 5 -7.5 0.3Z" fill="#000"/><path d="M-4.6 0.6Q-2.5 -3.3 0.5 -3.4Q3.6 -3.2 4.8 0.4Q3 3.6 0 3.6Q-3 3.5 -4.6 0.6Z" fill="#fff"/><circle cx="0" cy="0" r="2.6" fill="#000"/><circle cx="-0.8" cy="-1.2" r="0.6" fill="#fff"/></g><path d="M1441.4 206.0V204.0A3.6 3.9 0 0 1 1448.6 204.0V206.0" fill="none" stroke="#c2c2c2" stroke-width="1.3"/><rect x="1440.2" y="206.2" width="9.6" height="7.8" fill="#c2c2c2"/><rect x="1161.5" y="223.5" width="15.5" height="8" fill="#fff" stroke="#000" stroke-width="1"/><text x="1183" y="232.2" font-family="Liberation Sans" font-size="13" fill="#1a1a1a">Visible</text><g transform="translate(1423 226.6) scale(1.0)"><path d="M-7.5 0.3Q-4 -5.8 0.5 -5.3Q5 -5.2 7.5 -0.5L6.5 1Q3.5 5.6 -0.5 5.3Q-5 5 -7.5 0.3Z" fill="#000"/><path d="M-4.6 0.6Q-2.5 -3.3 0.5 -3.4Q3.6 -3.2 4.8 0.4Q3 3.6 0 3.6Q-3 3.5 -4.6 0.6Z" fill="#fff"/><circle cx="0" cy="0" r="2.6" fill="#000"/><circle cx="-0.8" cy="-1.2" r="0.6" fill="#fff"/></g><path d="M1441.4 226.0V224.0A3.6 3.9 0 0 1 1448.6 224.0V226.0" fill="none" stroke="#c2c2c2" stroke-width="1.3"/><rect x="1440.2" y="226.2" width="9.6" height="7.8" fill="#c2c2c2"/><path d="M1394 233L1406.5 221.5" stroke="#8a5a10" stroke-width="2.6" stroke-linecap="butt"/><path d="M1394 233L1406.5 221.5" stroke="#e8b040" stroke-width="1.6"/><path d="M1404.3 223.7L1407.0 221.0" stroke="#e02020" stroke-width="2.8" stroke-linecap="round"/><path d="M1394 233L1396 231" stroke="#333" stroke-width="1.2"/><rect x="1455" y="107" width="45" height="691" fill="url(#grstrip)"/><rect x="1454.2" y="107" width="1" height="691" fill="#c8c8c8"/><rect x="1461.75" y="116.3" width="1.5" height="1.5" fill="#9a9a9a"/><rect x="1467.95" y="116.3" width="1.5" height="1.5" fill="#9a9a9a"/><rect x="1474.15" y="116.3" width="1.5" height="1.5" fill="#9a9a9a"/><rect x="1480.35" y="116.3" width="1.5" height="1.5" fill="#9a9a9a"/><rect x="1486.55" y="116.3" width="1.5" height="1.5" fill="#9a9a9a"/><rect x="1492.75" y="116.3" width="1.5" height="1.5" fill="#9a9a9a"/><path d="M1460 261.5H1500M1460 408.5H1500" stroke="#888" stroke-width="1" stroke-dasharray="1 2.2"/><rect x="1456.4" y="120.2" width="43" height="42.5" rx="5" fill="#b9b9b9"/><rect x="1456.4" y="417" width="43" height="42.5" rx="5" fill="#b9b9b9"/><rect x="1463.5" y="128.0" width="27" height="27" fill="#fff" stroke="#222" stroke-width="1"/><rect x="1463.5" y="128.0" width="27" height="4" fill="#000"/><rect x="1465" y="129.0" width="3" height="3" fill="#fff"/><path d="M1471 141L1475 139.5V150L1471 151.5Z" fill="#bbb" stroke="#555" stroke-width="0.7"/><path d="M1474 140L1484 136V147L1474 151Z" fill="#f4f4f4" stroke="#555" stroke-width="0.8"/><path d="M1477 146L1481 140L1481.5 146Z" fill="none" stroke="#e03030" stroke-width="0.8"/><rect x="1463.5" y="175.0" width="27" height="27" fill="#fff" stroke="#222" stroke-width="1"/><rect x="1463.5" y="175.0" width="27" height="4" fill="#000"/><rect x="1465" y="176.0" width="3" height="3" fill="#fff"/><rect x="1470" y="186" width="11" height="8" fill="#f2e6b0" stroke="#666" stroke-width="0.8"/><circle cx="1482" cy="194" r="5" fill="#f2e6b0" fill-opacity="0.85" stroke="#666" stroke-width="0.8"/><rect x="1463.5" y="220.5" width="27" height="27" fill="#fff" stroke="#222" stroke-width="1"/><rect x="1463.5" y="220.5" width="27" height="4" fill="#000"/><rect x="1465" y="221.5" width="3" height="3" fill="#fff"/><rect x="1469.5" y="229.5" width="16" height="11" rx="2" fill="#f2f4f8" stroke="#a8bcd8" stroke-width="0.8"/><rect x="1463.5" y="276.0" width="27" height="27" fill="#fff" stroke="#222" stroke-width="1"/><rect x="1463.5" y="276.0" width="27" height="4" fill="#000"/><rect x="1465" y="277.0" width="3" height="3" fill="#fff"/><rect x="1467.5" y="285.0" width="3" height="3" fill="#000"/><rect x="1473" y="285.0" width="14" height="3" fill="#fff" stroke="#333" stroke-width="0.7"/><rect x="1467.5" y="290.5" width="3" height="3" fill="#000"/><rect x="1473" y="290.5" width="14" height="3" fill="#fff" stroke="#333" stroke-width="0.7"/><rect x="1467.5" y="296.0" width="3" height="3" fill="#000"/><rect x="1473" y="296.0" width="14" height="3" fill="#fff" stroke="#333" stroke-width="0.7"/><rect x="1463.5" y="322.5" width="27" height="27" fill="#fff" stroke="#222" stroke-width="1"/><rect x="1463.5" y="322.5" width="27" height="4" fill="#000"/><rect x="1465" y="323.5" width="3" height="3" fill="#fff"/><path d="M1470 333H1484L1479 339V346L1475 344V339Z" fill="#d0d0d0" stroke="#555" stroke-width="0.7"/><rect x="1463.5" y="368.0" width="27" height="27" fill="#fff" stroke="#222" stroke-width="1"/><rect x="1463.5" y="368.0" width="27" height="4" fill="#000"/><rect x="1465" y="369.0" width="3" height="3" fill="#fff"/><path d="M1469 383H1486" stroke="#e06060" stroke-width="0.8" stroke-dasharray="1 1"/><path d="M1470 377L1474 379V387L1470 389Z" fill="#fff" stroke="#555" stroke-width="0.7"/><rect x="1475" y="378" width="8" height="10" rx="1" fill="#bbb" stroke="#555" stroke-width="0.7"/><rect x="1463.5" y="424.5" width="27" height="27" fill="#fff" stroke="#222" stroke-width="1"/><rect x="1463.5" y="424.5" width="27" height="4" fill="#000"/><rect x="1465" y="425.5" width="3" height="3" fill="#fff"/><path d="M1467 438H1480M1467 441H1478M1467 444H1481M1467 447H1480" stroke="#999" stroke-width="0.8"/><path d="M1464 449H1490" stroke="#333" stroke-width="0.6"/><rect x="1463.5" y="471.0" width="27" height="27" fill="#fff" stroke="#222" stroke-width="1"/><rect x="1463.5" y="471.0" width="27" height="4" fill="#000"/><rect x="1465" y="472.0" width="3" height="3" fill="#fff"/><rect x="1470" y="480" width="13" height="15" rx="1" fill="#c8841a"/><rect x="1472" y="482" width="9" height="12" fill="#fafafa"/><rect x="1473.5" y="478.5" width="6" height="3" fill="#999"/></svg>
<svg class="a" style="left:0;top:0" width="1500" height="108" viewBox="0 0 1500 108"><defs>
<linearGradient id="gpaper" x1="0" y1="0" x2="0" y2="1"><stop offset="0" stop-color="#fdfdfd"/><stop offset="1" stop-color="#ececec"/></linearGradient>
<radialGradient id="gglow"><stop offset="0" stop-color="#ffffff"/><stop offset="0.25" stop-color="#fff23a"/><stop offset="0.7" stop-color="#f0e020"/><stop offset="1" stop-color="#f0e020" stop-opacity="0"/></radialGradient>
<linearGradient id="gblue" x1="0" y1="0" x2="0" y2="1"><stop offset="0" stop-color="#8db4ea"/><stop offset="1" stop-color="#5a8fd6"/></linearGradient>
<linearGradient id="gflop" x1="0" y1="0" x2="1" y2="0"><stop offset="0" stop-color="#7fb0ff"/><stop offset="0.5" stop-color="#4a86f0"/><stop offset="1" stop-color="#3d78e8"/></linearGradient>
<linearGradient id="ggreen" x1="0" y1="0" x2="0" y2="1"><stop offset="0" stop-color="#7fd07a"/><stop offset="1" stop-color="#3aa640"/></linearGradient>
<radialGradient id="glens" cx="0.45" cy="0.35" r="0.7"><stop offset="0" stop-color="#b9d3f5"/><stop offset="0.5" stop-color="#7ea8e3"/><stop offset="1" stop-color="#5d8ed8"/></radialGradient>
<linearGradient id="gprn" x1="0" y1="0" x2="0" y2="1"><stop offset="0" stop-color="#f6f6f6"/><stop offset="1" stop-color="#d4d4d4"/></linearGradient><radialGradient id="glens2" cx="0.4" cy="0.35" r="0.75"><stop offset="0" stop-color="#e4eefa"/><stop offset="1" stop-color="#9ab9e4"/></radialGradient>
<linearGradient id="gbtn2" x1="0" y1="0" x2="0" y2="1"><stop offset="0" stop-color="#fbfbfb"/><stop offset="1" stop-color="#dedede"/></linearGradient>
</defs><rect x="7.2" y="32.2" width="1.6" height="1.6" fill="#8c8c8c"/><rect x="7.2" y="38.2" width="1.6" height="1.6" fill="#8c8c8c"/><rect x="7.2" y="44.2" width="1.6" height="1.6" fill="#8c8c8c"/><rect x="7.2" y="50.2" width="1.6" height="1.6" fill="#8c8c8c"/><rect x="7.2" y="56.2" width="1.6" height="1.6" fill="#8c8c8c"/><rect x="87.2" y="32.2" width="1.6" height="1.6" fill="#8c8c8c"/><rect x="87.2" y="38.2" width="1.6" height="1.6" fill="#8c8c8c"/><rect x="87.2" y="44.2" width="1.6" height="1.6" fill="#8c8c8c"/><rect x="87.2" y="50.2" width="1.6" height="1.6" fill="#8c8c8c"/><rect x="87.2" y="56.2" width="1.6" height="1.6" fill="#8c8c8c"/><rect x="402.2" y="32.2" width="1.6" height="1.6" fill="#8c8c8c"/><rect x="402.2" y="38.2" width="1.6" height="1.6" fill="#8c8c8c"/><rect x="402.2" y="44.2" width="1.6" height="1.6" fill="#8c8c8c"/><rect x="402.2" y="50.2" width="1.6" height="1.6" fill="#8c8c8c"/><rect x="402.2" y="56.2" width="1.6" height="1.6" fill="#8c8c8c"/><rect x="708.2" y="32.2" width="1.6" height="1.6" fill="#8c8c8c"/><rect x="708.2" y="38.2" width="1.6" height="1.6" fill="#8c8c8c"/><rect x="708.2" y="44.2" width="1.6" height="1.6" fill="#8c8c8c"/><rect x="708.2" y="50.2" width="1.6" height="1.6" fill="#8c8c8c"/><rect x="708.2" y="56.2" width="1.6" height="1.6" fill="#8c8c8c"/><path d="M186.5 26V66" stroke="#777" stroke-width="1" stroke-dasharray="1 2"/><path d="M288.5 26V66" stroke="#777" stroke-width="1" stroke-dasharray="1 2"/><path d="M344.5 26V66" stroke="#777" stroke-width="1" stroke-dasharray="1 2"/><path d="M501.5 26V66" stroke="#777" stroke-width="1" stroke-dasharray="1 2"/><path d="M557.5 26V66" stroke="#777" stroke-width="1" stroke-dasharray="1 2"/><path d="M854.5 26V66" stroke="#777" stroke-width="1" stroke-dasharray="1 2"/><path d="M911.5 26V66" stroke="#777" stroke-width="1" stroke-dasharray="1 2"/><rect x="565" y="25.3" width="43" height="41.5" rx="4" fill="#b7b7b7"/><rect x="805" y="25.3" width="43" height="41.5" rx="4" fill="#b7b7b7"/><rect x="862" y="25.3" width="43" height="41.5" rx="4" fill="#b7b7b7"/><path d="M27.5 36.5V53L31.3 49.6L34.6 56.2L37.2 55L34 48.6L39.2 48.4Z" fill="#fff" stroke="#333" stroke-width="1" stroke-linejoin="round"/><rect x="100.5" y="32.5" width="24" height="27.5" rx="1" fill="url(#gpaper)" stroke="#9a9a9a" stroke-width="1"/><path d="M101 60.5H124" stroke="#777" stroke-width="1.2"/><circle cx="120.8" cy="37.6" r="7" fill="url(#gglow)"/><path d="M143.5 35L150 34V57L145 57Z" fill="#9a9a9a" stroke="#777" stroke-width="0.8"/><path d="M150.5 32.5H172V45H147.5Z" fill="#f4f4f4" stroke="#7a7a7a" stroke-width="0.9"/><path d="M152 36H168M151 39.5H168M150.5 42.5H167" stroke="#b8b8b8" stroke-width="1.2"/><path d="M150 43H175L171.5 57.5H146Z" fill="url(#gblue)" stroke="#3f6fb5" stroke-width="0.9"/><rect x="202.5" y="33.3" width="24" height="25" rx="2.5" fill="url(#gflop)" stroke="#2230a0" stroke-width="1"/><rect x="206" y="34.3" width="17.5" height="11.5" fill="#eef2ff"/><rect x="207.5" y="48" width="12" height="10" fill="#e8e8ee"/><rect x="209.5" y="51" width="1.8" height="3.5" fill="#1030c0"/><rect x="248.5" y="33.3" width="24" height="25" rx="2.5" fill="url(#gflop)" stroke="#2230a0" stroke-width="1"/><rect x="252" y="34.3" width="17.5" height="11.5" fill="#eef2ff"/><rect x="253.5" y="48" width="12" height="10" fill="#e8e8ee"/><rect x="255.5" y="51" width="1.8" height="3.5" fill="#1030c0"/><path d="M257.5 51.5L259 47.5L272 33.5L275.5 37L262 50Z" fill="#f5b21a" stroke="#a02010" stroke-width="0.9"/><path d="M257.5 51.5L259 47.5L261.5 50Z" fill="#333"/><path d="M271 34.5L274.5 38" stroke="#ddd" stroke-width="1.5"/><rect x="305.4" y="42.5" width="23.1" height="15.2" rx="2.8" fill="#000"/><circle cx="316.9" cy="37.2" r="3.6" fill="#000"/><circle cx="310.7" cy="39.8" r="3.6" fill="#000"/><circle cx="323.2" cy="39.8" r="3.6" fill="#000"/><path d="M310.7 39.8L316.9 44.5L323.2 39.8M316.9 37.2V44.5" stroke="#000" stroke-width="5" stroke-linecap="round"/><path d="M310.7 39.8L316.9 44.5L323.2 39.8M316.9 37.2V44.5" stroke="#f7a92e" stroke-width="2.1" stroke-linecap="round"/><circle cx="316.9" cy="37.2" r="2.3" fill="#f7a92e"/><circle cx="310.7" cy="39.8" r="2.3" fill="#f7a92e"/><circle cx="323.2" cy="39.8" r="2.3" fill="#f7a92e"/><path d="M307 45.9Q312 44 316.9 43.8Q322 44 327 45.9Z" fill="#f7a92e"/><text x="317" y="56.4" text-anchor="middle" font-family="Liberation Sans" font-weight="bold" font-size="12" fill="#fff" textLength="18.5" lengthAdjust="spacingAndGlyphs">SVG</text><ellipse cx="373" cy="58.3" rx="13" ry="1.3" fill="#b8b8b8" opacity="0.6"/><rect x="364" y="32" width="18" height="14" fill="#f2f2f2" stroke="#c4c4c4" stroke-width="0.8"/><path d="M366 35H380M366 38H380M366 41H380" stroke="#d8d8d8" stroke-width="0.8"/><path d="M359.5 46Q359.5 43 362.5 43H384Q387 43 387 46V55.5Q387 57.5 385 57.5H361.5Q359.5 57.5 359.5 55.5Z" fill="url(#gprn)" stroke="#9a9a9a" stroke-width="0.9"/><path d="M361 53.5H385.5" stroke="#c0c0c0" stroke-width="0.8"/><circle cx="363.5" cy="49" r="0.7" fill="#666"/><path d="M372 44.5L380.5 52" stroke="#7a7a7a" stroke-width="2.6" stroke-linecap="round"/><path d="M372 44.5L380.5 52" stroke="#c8c8c8" stroke-width="1" stroke-linecap="round"/><circle cx="368.5" cy="40.5" r="6.6" fill="#f6f6f6" stroke="#a8a8a8" stroke-width="0.7"/><circle cx="368.5" cy="40.5" r="5.2" fill="url(#glens2)" stroke="#4f84d0" stroke-width="1"/><path d="M413.7 37.2L420.5 43.3Q425 34 432 34Q441.8 34.5 441.8 45Q441.5 55.5 426.5 58.2Q434.5 53 434.5 47Q434 41.5 428.5 41.5Q424.5 41.8 422 46.4L426.8 51.7H413.7Z" fill="url(#ggreen)" stroke="#1f8030" stroke-width="0.9" stroke-linejoin="round"/><g transform="translate(903.3 0) scale(-1 1)"><path d="M413.7 37.2L420.5 43.3Q425 34 432 34Q441.8 34.5 441.8 45Q441.5 55.5 426.5 58.2Q434.5 53 434.5 47Q434 41.5 428.5 41.5Q424.5 41.8 422 46.4L426.8 51.7H413.7Z" fill="url(#ggreen)" stroke="#1f8030" stroke-width="0.9" stroke-linejoin="round"/></g><ellipse cx="531" cy="57.3" rx="12.5" ry="1.4" fill="#d0d0d0"/><path d="M517.2 51.2L537 33.3Q538.5 32.3 540 33.5L542.5 36Q543.5 37.3 542.8 38L523.5 57Z" fill="#d41c1c" stroke="#7a1010" stroke-width="0.8" stroke-linejoin="round"/><path d="M520.5 49L539.5 35.5L541 37.2L522.8 52.5Z" fill="#f4f4f4"/><path d="M517.2 51.2L522 46.8L528.2 52.5L523.5 57Z" fill="#f2f2f2" stroke="#6a6a6a" stroke-width="0.8" stroke-linejoin="round"/><g transform="translate(0 0) scale(1.0)"><path d="M586 31.2L589.6 30.6L588.8 45L585.8 46Z" fill="#ececec" stroke="#7a7a7a" stroke-width="0.9" stroke-linejoin="round"/><path d="M588.3 43.2L599.6 37.2L600 40.6L588.5 46.6Z" fill="#ececec" stroke="#7a7a7a" stroke-width="0.9" stroke-linejoin="round"/><path d="M581 47.2Q584.5 45.5 587.4 45.8Q588.6 48 588.5 50.6" stroke="#e0141e" stroke-width="1.9" fill="none"/><ellipse cx="577" cy="48.4" rx="4.8" ry="2.9" transform="rotate(-16 577 48.4)" fill="none" stroke="#e0141e" stroke-width="1.9"/><ellipse cx="588.4" cy="55.4" rx="2.6" ry="4.9" transform="rotate(-6 588.4 55.4)" fill="none" stroke="#e0141e" stroke-width="1.9"/><path d="M572.9 57.8H578.1M575.5 55.2V60.4" stroke="#000" stroke-width="1.1"/></g><path d="M619.5 31.5H639.5V55H619.5Z" fill="#f6f6f6" stroke="#a8a8a8" stroke-width="0.9"/><path d="M621.5 39H630M621.5 42H630M621.5 45H630M621.5 48H630" stroke="#c8c8c8" stroke-width="0.8"/><path d="M627.5 36.5H647.5V58L645 60.5H627.5Z" fill="#f8f8f8" stroke="#8e8e8e" stroke-width="1"/><path d="M643.5 60.5V56.5H647.5Z" fill="#a0a0a0"/><path d="M630 43H644M630 46H644M630 49H643M630 52H640" stroke="#c8c8c8" stroke-width="0.8"/><path d="M619.5 57H625M622.2 54.3V59.8" stroke="#000" stroke-width="1"/><rect x="665.7" y="33" width="26.5" height="27.5" rx="1.2" fill="#c8841a" stroke="#9a6210" stroke-width="0.8"/><path d="M668.5 35.5H688.5V55L686 57.5H668.5Z" fill="#fafafa"/><path d="M686 57.5V55H688.5Z" fill="#999"/><path d="M671 41H686M671 44H686M671 47H685M671 50H686M671 53H680" stroke="#cfcfcf" stroke-width="0.8"/><path d="M671.5 37.5V35Q671.5 33.5 673 33.5H675.5V30.5H682.5V33.5H685Q686.5 33.5 686.5 35V37.5Z" fill="#a8a89e" stroke="#777" stroke-width="0.6"/><path d="M723 56.3H745" stroke="#f00000" stroke-width="1.2"/><path d="M724 54.5L725.8 49.5L740 35.5Q741.8 34 743.4 35.6L744.4 36.6Q746 38.2 744.5 40L730.5 54Z" fill="#e03a20" stroke="#6a3010" stroke-width="0.8"/><path d="M724 54.5L725.8 49.5L729.5 53Z" fill="#f0d0a0"/><path d="M724 54.5L725 51.8L726.8 53.5Z" fill="#222"/><path d="M739.5 36.5L743.5 40.5" stroke="#d0d0d0" stroke-width="1.6"/><rect x="765.5" y="35.3" width="29" height="22" rx="0.8" fill="#000080" stroke="#222" stroke-width="0.8"/><path d="M769 54L791 39V54Z" fill="none" stroke="#eee" stroke-width="1.3" stroke-dasharray="2.5 1.5"/><circle cx="825.8" cy="45.8" r="13" fill="none" stroke="#000" stroke-width="1.9"/><path d="M812 60.5L840 32" stroke="#0010ff" stroke-width="1.1"/><rect x="870" y="33" width="2" height="2" fill="#000"/><rect x="870" y="41" width="2" height="2" fill="#000"/><rect x="870" y="49" width="2" height="2" fill="#000"/><rect x="870" y="57" width="2" height="2" fill="#000"/><rect x="878" y="33" width="2" height="2" fill="#000"/><rect x="878" y="41" width="2" height="2" fill="#000"/><rect x="878" y="49" width="2" height="2" fill="#000"/><rect x="878" y="57" width="2" height="2" fill="#000"/><rect x="886" y="33" width="2" height="2" fill="#000"/><rect x="886" y="41" width="2" height="2" fill="#000"/><rect x="886" y="49" width="2" height="2" fill="#000"/><rect x="886" y="57" width="2" height="2" fill="#000"/><rect x="894" y="33" width="2" height="2" fill="#000"/><rect x="894" y="41" width="2" height="2" fill="#000"/><rect x="894" y="49" width="2" height="2" fill="#000"/><rect x="894" y="57" width="2" height="2" fill="#000"/><ellipse cx="940.2" cy="57.5" rx="9.0" ry="2" fill="#bdbdbd" opacity="0.35"/><path d="M944.7 49.5L951.7 56.5" stroke="#555" stroke-width="3.8" stroke-linecap="round"/><path d="M945.7 50.5L951.2 56.0" stroke="#8a8a8a" stroke-width="1.2" stroke-linecap="round"/><circle cx="936.2" cy="41.5" r="11.3" fill="#e4e4de" stroke="#a8a8a0" stroke-width="0.8"/><circle cx="936.2" cy="41.5" r="9.3" fill="url(#glens)" stroke="#6b94cf" stroke-width="0.6"/><path d="M936.2 35V48M929.7 41.5H942.7" stroke="#3a64a8" stroke-width="4.3"/><path d="M936.2 35.5V47.5M930.2 41.5H942.2" stroke="#fff" stroke-width="2.6"/><ellipse cx="986.2" cy="57.5" rx="9.0" ry="2" fill="#bdbdbd" opacity="0.35"/><path d="M990.7 49.5L997.7 56.5" stroke="#555" stroke-width="3.8" stroke-linecap="round"/><path d="M991.7 50.5L997.2 56.0" stroke="#8a8a8a" stroke-width="1.2" stroke-linecap="round"/><circle cx="982.2" cy="41.5" r="11.3" fill="#e4e4de" stroke="#a8a8a0" stroke-width="0.8"/><circle cx="982.2" cy="41.5" r="9.3" fill="url(#glens)" stroke="#6b94cf" stroke-width="0.6"/><path d="M976 41.5H988.5" stroke="#3a64a8" stroke-width="3.6"/><path d="M976.5 41.5H988" stroke="#fff" stroke-width="2.2"/><ellipse cx="1032" cy="57.5" rx="9.0" ry="2" fill="#bdbdbd" opacity="0.35"/><path d="M1036.5 49.5L1043.5 56.5" stroke="#555" stroke-width="3.8" stroke-linecap="round"/><path d="M1037.5 50.5L1043.0 56.0" stroke="#8a8a8a" stroke-width="1.2" stroke-linecap="round"/><circle cx="1028" cy="41.5" r="11.3" fill="#e4e4de" stroke="#a8a8a0" stroke-width="0.8"/><circle cx="1028" cy="41.5" r="9.3" fill="url(#glens)" stroke="#6b94cf" stroke-width="0.6"/><rect x="1024" y="37.5" width="8" height="8" fill="#a9c4ea"/><path d="M1022 39.0V35.5H1025.5M1030.5 35.5H1034V39.0M1034 44.0V47.5H1030.5M1025.5 47.5H1022V44.0" stroke="#fff" stroke-width="1.8" fill="none"/><ellipse cx="1078" cy="57.5" rx="9.0" ry="2" fill="#bdbdbd" opacity="0.35"/><path d="M1082.5 49.5L1089.5 56.5" stroke="#555" stroke-width="3.8" stroke-linecap="round"/><path d="M1083.5 50.5L1089.0 56.0" stroke="#8a8a8a" stroke-width="1.2" stroke-linecap="round"/><circle cx="1074" cy="41.5" r="11.3" fill="#e4e4de" stroke="#a8a8a0" stroke-width="0.8"/><circle cx="1074" cy="41.5" r="9.3" fill="url(#glens)" stroke="#6b94cf" stroke-width="0.6"/><rect x="1070" y="37.5" width="8" height="8" fill="#a9c4ea"/><path d="M1068 39.0V35.5H1071.5M1076.5 35.5H1080V39.0M1080 44.0V47.5H1076.5M1071.5 47.5H1068V44.0" stroke="#ee0000" stroke-width="2.2" fill="none"/><ellipse cx="1124" cy="57.8" rx="9.0" ry="2" fill="#bdbdbd" opacity="0.35"/><path d="M1128.5 49.8L1135.5 56.8" stroke="#555" stroke-width="3.8" stroke-linecap="round"/><path d="M1129.5 50.8L1135.0 56.3" stroke="#8a8a8a" stroke-width="1.2" stroke-linecap="round"/><circle cx="1120" cy="41.8" r="11.3" fill="#e4e4de" stroke="#a8a8a0" stroke-width="0.8"/><circle cx="1120" cy="41.8" r="9.3" fill="url(#glens)" stroke="#6b94cf" stroke-width="0.6"/><path d="M1112.5 41.8L1119.5 35.8V39.3H1127V44.3H1119.5V47.8Z" fill="#fff" stroke="#3a64a8" stroke-width="0.6"/><rect x="1154.5" y="30.3" width="27.5" height="18" rx="1" fill="#fdfdfd" stroke="#5a88cc" stroke-width="0.9"/><ellipse cx="1172.2" cy="58.47610619469027" rx="7.8053097345132745" ry="2" fill="#bdbdbd" opacity="0.35"/><path d="M1175.5716814159293 51.538053097345134L1181.6424778761063 57.60884955752213" stroke="#555" stroke-width="3.2955752212389378" stroke-linecap="round"/><path d="M1176.4389380530974 52.405309734513274L1181.2088495575222 57.17522123893805" stroke="#8a8a8a" stroke-width="1.0407079646017698" stroke-linecap="round"/><circle cx="1168.2" cy="44.6" r="9.8" fill="#e4e4de" stroke="#a8a8a0" stroke-width="0.8"/><circle cx="1168.2" cy="44.6" r="7.800000000000001" fill="url(#glens)" stroke="#6b94cf" stroke-width="0.6"/><path d="M1160.5 45.5Q1168.2 48.5 1176 45.5" stroke="#4a7cc4" stroke-width="1.4" fill="none" opacity="0.7"/><ellipse cx="1217" cy="58.7" rx="9.0" ry="2" fill="#bdbdbd" opacity="0.35"/><path d="M1221.5 50.7L1228.5 57.7" stroke="#555" stroke-width="3.8" stroke-linecap="round"/><path d="M1222.5 51.7L1228.0 57.2" stroke="#8a8a8a" stroke-width="1.2" stroke-linecap="round"/><circle cx="1213" cy="42.7" r="11.3" fill="#e4e4de" stroke="#a8a8a0" stroke-width="0.8"/><circle cx="1213" cy="42.7" r="9.3" fill="url(#glens)" stroke="#6b94cf" stroke-width="0.6"/><path d="M1213 30.5L1217 35H1214.5V41.2H1220.7V38.7L1225.2 42.7L1220.7 46.7V44.2H1214.5V50.4H1217L1213 54.9L1209 50.4H1211.5V44.2H1205.3V46.7L1200.8 42.7L1205.3 38.7V41.2H1211.5V35H1209Z" fill="#fff" stroke="#4f80c8" stroke-width="0.9"/><rect x="7.2" y="77.2" width="1.6" height="1.6" fill="#8c8c8c"/><rect x="7.2" y="83.2" width="1.6" height="1.6" fill="#8c8c8c"/><rect x="7.2" y="89.2" width="1.6" height="1.6" fill="#8c8c8c"/><rect x="7.2" y="95.2" width="1.6" height="1.6" fill="#8c8c8c"/><path d="M67.5 71V105" stroke="#777" stroke-width="1" stroke-dasharray="1 2"/><rect x="15.2" y="73.2" width="42.6" height="30.6" rx="4.5" fill="url(#gbtn2)" stroke="#888" stroke-width="1.8"/><g transform="translate(-475.7 47.5) scale(0.875)"><path d="M586 31.2L589.6 30.6L588.8 45L585.8 46Z" fill="#ececec" stroke="#7a7a7a" stroke-width="0.9" stroke-linejoin="round"/><path d="M588.3 43.2L599.6 37.2L600 40.6L588.5 46.6Z" fill="#ececec" stroke="#7a7a7a" stroke-width="0.9" stroke-linejoin="round"/><path d="M581 47.2Q584.5 45.5 587.4 45.8Q588.6 48 588.5 50.6" stroke="#e0141e" stroke-width="1.9" fill="none"/><ellipse cx="577" cy="48.4" rx="4.8" ry="2.9" transform="rotate(-16 577 48.4)" fill="none" stroke="#e0141e" stroke-width="1.9"/><ellipse cx="588.4" cy="55.4" rx="2.6" ry="4.9" transform="rotate(-6 588.4 55.4)" fill="none" stroke="#e0141e" stroke-width="1.9"/><path d="M572.9 57.8H578.1M575.5 55.2V60.4" stroke="#000" stroke-width="1.1"/></g><circle cx="596.5" cy="56" r="35.5" fill="none" stroke="#a9bdd0" stroke-width="5.5" opacity="0.42"/><circle cx="596.5" cy="56" r="35.5" fill="none" stroke="#9ab0c6" stroke-width="1.2" opacity="0.5"/><path d="M597.4 56.6V77.3L602.5 72.6L608.4 82.9L611 80.9L606.6 71.4L612 71Z" fill="#fff" stroke="#000" stroke-width="1.3" stroke-linejoin="round"/></svg>
<div class="a" style="left:0;top:797.5px;width:1500px;height:47px;background:#dcdcdc;border-top:1px solid #c6c6c6"></div>
<div style="position:absolute;color:#141414;white-space:nowrap;line-height:12px;font-size:9.3px;left:0.6px;top:806.4px;letter-spacing:0.93px">45.8525,35.5343</div>
<div style="position:absolute;color:#141414;white-space:nowrap;line-height:12px;font-size:9.3px;left:-1px;top:826.5px;letter-spacing:0.8px">@37.8525,25.5343</div>
<div class="a" style="left:253px;top:802px;width:1px;height:40px;background:#9a9a9a"></div><div class="a" style="left:254px;top:802px;width:1px;height:40px;background:#f4f4f4"></div>
<div style="position:absolute;color:#141414;white-space:nowrap;line-height:12px;font-size:9.3px;left:256px;top:806.4px;letter-spacing:0.72px">58.0098&lt;38°</div>
<div style="position:absolute;color:#141414;white-space:nowrap;line-height:12px;font-size:9.3px;left:256px;top:826.5px;letter-spacing:0.45px">@45.6597&lt;34°</div>
<div style="position:absolute;color:#141414;white-space:nowrap;line-height:12px;font-size:9.8px;left:627.5px;top:816.5px;letter-spacing:0.08px">Reference point</div>
<div style="position:absolute;color:#141414;white-space:nowrap;line-height:12px;font-size:9.8px;left:754.4px;top:816.5px;letter-spacing:-0.12px">Cancel</div>
<div style="position:absolute;color:#141414;white-space:nowrap;line-height:12px;font-size:9.5px;left:949.3px;top:810.9px;letter-spacing:0.33px">Selected entities:</div>
<div style="position:absolute;color:#141414;white-space:nowrap;line-height:12px;font-size:9.5px;left:949.3px;top:821.7px;letter-spacing:0.27px">3 Entities on 2 Layers.</div>
<svg class="a" style="left:500px;top:800px" width="800" height="44" viewBox="500 800 800 44"><circle cx="509.2" cy="821.9" r="3" fill="#c6c6c6"/><circle cx="943.4" cy="821.8" r="3" fill="#c6c6c6"/><circle cx="1272" cy="822" r="3" fill="#c6c6c6"/><rect x="717.5" y="806.5" width="17" height="29" rx="8.5" fill="#fff" stroke="#555" stroke-width="0.9"/><path d="M717.5 819.5Q726 817 734.5 819.5M726 818V806.5" stroke="#555" stroke-width="0.9" fill="none"/><rect x="724.6" y="808.5" width="2.8" height="6.5" rx="1.4" fill="#fff" stroke="#555" stroke-width="0.8"/></svg>
<div class="a" style="left:582.8px;top:114px;font-size:12px;color:#1a1a1a;line-height:12px;white-space:nowrap">* bond_washer.dxf</div>
<svg class="a" style="left:72px;top:108px" width="50" height="24" viewBox="72 108 50 24"><path d="M79 115L87 123M87 115L79 123" stroke="#6a6a6a" stroke-width="1.1"/><circle cx="102" cy="118.8" r="5.6" fill="#eef0f4" stroke="#2a4a9a" stroke-width="1.6"/><path d="M99 116L102 119L104 117" stroke="#c05050" stroke-width="0.6" fill="none"/><path d="M102 119L106.5 123.5" stroke="#f0a020" stroke-width="2"/><path d="M106 123L107.5 124.5" stroke="#e04040" stroke-width="1.5"/></svg>
</body></html>
